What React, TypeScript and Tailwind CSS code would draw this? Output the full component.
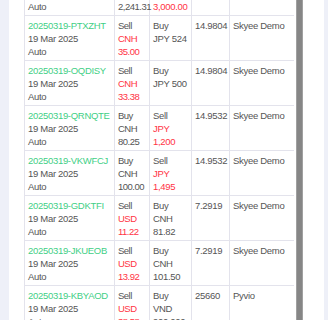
import React from "react";

type Cell = { text: string; red?: boolean }[];
type Row = {
  id: string;
  date: string;
  mode: string;
  sell: Cell;
  buy: Cell;
  rate: string;
  client: string;
};

const g = (text: string) => ({ text });
const r = (text: string) => ({ text, red: true });

const rows: Row[] = [
  {
    id: "20250319-LMWQRA",
    date: "19 Mar 2025",
    mode: "Auto",
    sell: [g("Buy"), g("USD"), g("2,241.31")],
    buy: [g("Sell"), r("CNH"), r("3,000.00")],
    rate: "",
    client: "",
  },
  {
    id: "20250319-PTXZHT",
    date: "19 Mar 2025",
    mode: "Auto",
    sell: [g("Sell"), r("CNH"), r("35.00")],
    buy: [g("Buy"), g("JPY 524")],
    rate: "14.9804",
    client: "Skyee Demo",
  },
  {
    id: "20250319-OQDISY",
    date: "19 Mar 2025",
    mode: "Auto",
    sell: [g("Sell"), r("CNH"), r("33.38")],
    buy: [g("Buy"), g("JPY 500")],
    rate: "14.9804",
    client: "Skyee Demo",
  },
  {
    id: "20250319-QRNQTE",
    date: "19 Mar 2025",
    mode: "Auto",
    sell: [g("Buy"), g("CNH"), g("80.25")],
    buy: [g("Sell"), r("JPY"), r("1,200")],
    rate: "14.9532",
    client: "Skyee Demo",
  },
  {
    id: "20250319-VKWFCJ",
    date: "19 Mar 2025",
    mode: "Auto",
    sell: [g("Buy"), g("CNH"), g("100.00")],
    buy: [g("Sell"), r("JPY"), r("1,495")],
    rate: "14.9532",
    client: "Skyee Demo",
  },
  {
    id: "20250319-GDKTFI",
    date: "19 Mar 2025",
    mode: "Auto",
    sell: [g("Sell"), r("USD"), r("11.22")],
    buy: [g("Buy"), g("CNH"), g("81.82")],
    rate: "7.2919",
    client: "Skyee Demo",
  },
  {
    id: "20250319-JKUEOB",
    date: "19 Mar 2025",
    mode: "Auto",
    sell: [g("Sell"), r("USD"), r("13.92")],
    buy: [g("Buy"), g("CNH"), g("101.50")],
    rate: "7.2919",
    client: "Skyee Demo",
  },
  {
    id: "20250319-KBYAOD",
    date: "19 Mar 2025",
    mode: "Auto",
    sell: [g("Sell"), r("USD"), r("38.58")],
    buy: [g("Buy"), g("VND"), g("900,000")],
    rate: "25660",
    client: "Pyvio",
  },
];

const Lines = ({ cell }: { cell: Cell }) => (
  <>
    {cell.map((l, i) => (
      <div key={i} className={l.red ? "text-[#ff3344]" : ""}>
        {l.text}
      </div>
    ))}
  </>
);

const td = "border border-[#e3e3ec] px-[3px] pt-[3px] align-top whitespace-nowrap";

export default function App() {
  return (
    <div className="h-[320px] w-[328px] overflow-hidden bg-[#eef0f8] pl-[9px] pr-[4px]">
      <div className="flex h-full bg-white pl-[15px] pr-[21px]">
        <div className="w-[270px] overflow-hidden">
          <table
            className="-mt-[30px] w-[271px] table-fixed border-collapse border-l border-[#e3e3ec] text-[9.5px] leading-[13px] tracking-[-0.3px] text-[#555]"
            style={{ fontFamily: "'Liberation Sans', Arial, sans-serif" }}
          >
            <colgroup>
              <col className="w-[90px]" />
              <col className="w-[35px]" />
              <col className="w-[42px]" />
              <col className="w-[38px]" />
              <col className="w-[66px]" />
            </colgroup>
            <tbody>
              {rows.map((row) => (
                <tr key={row.id} className="h-[45px]">
                  <td className={td}>
                    <div className="text-[#3fcf86]">{row.id}</div>
                    <div>{row.date}</div>
                    <div>{row.mode}</div>
                  </td>
                  <td className={`${td} tracking-[-0.5px]`}>
                    <Lines cell={row.sell} />
                  </td>
                  <td className={td}>
                    <Lines cell={row.buy} />
                  </td>
                  <td className={td}>{row.rate}</td>
                  <td className={td}>{row.client}</td>
                </tr>
              ))}
            </tbody>
          </table>
        </div>
        <div className="ml-[2px] w-[7px] border-x border-[#a0a0a0] bg-[#868686]" />
      </div>
    </div>
  );
}
